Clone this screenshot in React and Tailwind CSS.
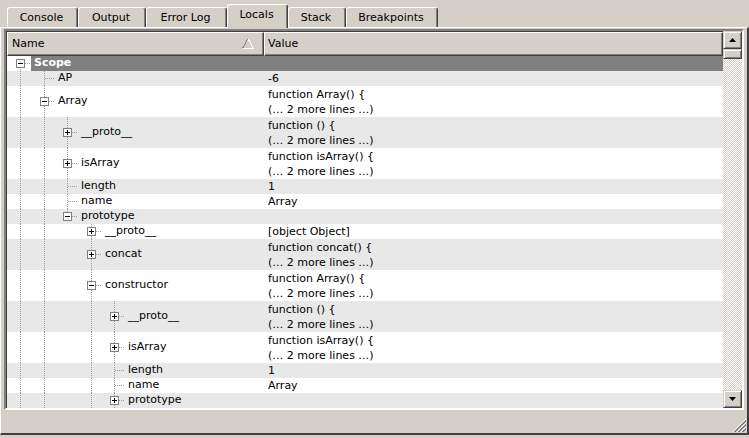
import React from 'react';

const MORE = '(… 2 more lines …)';

const tabs = [
  { label: 'Console', w: 'w-[71px]' },
  { label: 'Output', w: 'w-[68px]' },
  { label: 'Error Log', w: 'w-[81px]' },
  { label: 'Locals', w: 'w-[61px]', active: true },
  { label: 'Stack', w: 'w-[58px]' },
  { label: 'Breakpoints', w: 'w-[92px]' },
];

// own: how the item's own level line runs through the row
const rows = [
  { l: 0, name: 'Scope', box: 'minus', guides: [], own: 'start', scope: true },
  { l: 1, name: 'AP', value: ['-6'], guides: [0], own: 'through' },
  { l: 1, name: 'Array', value: ['function Array() {', MORE], box: 'minus', guides: [0], own: 'through' },
  { l: 2, name: '__proto__', value: ['function () {', MORE], box: 'plus', guides: [0, 1], own: 'through' },
  { l: 2, name: 'isArray', value: ['function isArray() {', MORE], box: 'plus', guides: [0, 1], own: 'through' },
  { l: 2, name: 'length', value: ['1'], guides: [0, 1], own: 'through' },
  { l: 2, name: 'name', value: ['Array'], guides: [0, 1], own: 'through' },
  { l: 2, name: 'prototype', value: [''], box: 'minus', guides: [0, 1], own: 'end' },
  { l: 3, name: '__proto__', value: ['[object Object]'], box: 'plus', guides: [0, 1], own: 'through' },
  { l: 3, name: 'concat', value: ['function concat() {', MORE], box: 'plus', guides: [0, 1], own: 'through' },
  { l: 3, name: 'constructor', value: ['function Array() {', MORE], box: 'minus', guides: [0, 1], own: 'through' },
  { l: 4, name: '__proto__', value: ['function () {', MORE], box: 'plus', guides: [0, 1, 3], own: 'through' },
  { l: 4, name: 'isArray', value: ['function isArray() {', MORE], box: 'plus', guides: [0, 1, 3], own: 'through' },
  { l: 4, name: 'length', value: ['1'], guides: [0, 1, 3], own: 'through' },
  { l: 4, name: 'name', value: ['Array'], guides: [0, 1, 3], own: 'through' },
  { l: 4, name: 'prototype', value: [''], box: 'plus', guides: [0, 1, 3], own: 'through' },
];

const indent = { 0: 'pl-[27px]', 1: 'pl-[51px]', 2: 'pl-[74px]', 3: 'pl-[98px]', 4: 'pl-[121px]' };

const LX = (l) => 13 + Math.round(23.5 * l);

function TreeLines({ row, h }) {
  const mid = Math.floor(h / 2);
  const x = LX(row.l);
  const y1 = row.own === 'start' ? mid : 0;
  const y2 = row.own === 'end' ? mid : h;
  const hEnd = row.scope ? 24 : x + 11;

  return (
    <svg className="absolute left-0 top-0" width={258} height={h}>
      <g stroke="#9c9c9c" strokeDasharray="1 1" shapeRendering="crispEdges">
        {row.guides.map((g) => (
          <line key={g} x1={LX(g) + 0.5} y1={0} x2={LX(g) + 0.5} y2={h} />
        ))}
        <line x1={x + 0.5} y1={y1} x2={x + 0.5} y2={y2} />
        <line x1={x + 1} y1={mid + 0.5} x2={hEnd} y2={mid + 0.5} />
      </g>
      {row.box && (
        <g shapeRendering="crispEdges">
          <rect x={x - 4 + 0.5} y={mid - 4 + 0.5} width={8} height={8} fill="#fff" stroke="#808080" />
          <line x1={x - 2} y1={mid + 0.5} x2={x + 3} y2={mid + 0.5} stroke="#000" />
          {row.box === 'plus' && <line x1={x + 0.5} y1={mid - 2} x2={x + 0.5} y2={mid + 3} stroke="#000" />}
        </g>
      )}
    </svg>
  );
}

function Row({ row, index }) {
  const double = row.value && row.value.length > 1;
  const h = double ? 31 : 15;
  const stripe = index % 2 === 1 ? 'bg-[#e8e8e8]' : 'bg-white';

  if (row.scope) {
    return (
      <div className="flex h-[15px] bg-white">
        <div className="relative w-[258px] shrink-0 h-full">
          <TreeLines row={row} h={h} />
          <div className="ml-[24px] h-full bg-[#808080] text-white font-bold pl-[3px] flex items-center">
            {row.name}
          </div>
        </div>
        <div className="flex-1 bg-[#808080]" />
      </div>
    );
  }

  return (
    <div className={`flex ${double ? 'h-[31px]' : 'h-[15px]'} ${stripe}`}>
      <div className={`relative w-[258px] shrink-0 h-full flex items-center ${indent[row.l]}`}>
        <TreeLines row={row} h={h} />
        <span className="relative">{row.name}</span>
      </div>
      <div className="flex-1 pl-[3px] flex flex-col justify-center leading-[15px]">
        {row.value.map((v, i) => (
          <div key={i} className="whitespace-nowrap">{v || '\u00a0'}</div>
        ))}
      </div>
    </div>
  );
}

function ScrollButton({ down }) {
  return (
    <div className="h-[18px] flex items-center justify-center bg-[#d4d0c8] border border-t-[#d4d0c8] border-l-[#d4d0c8] border-r-[#404040] border-b-[#404040] shadow-[inset_1px_1px_#ffffff,inset_-1px_-1px_#808080]">
      <svg width="7" height="4" viewBox="0 0 7 4">
        {down ? <polygon points="0,0 7,0 3.5,4" fill="#000" /> : <polygon points="3.5,0 7,4 0,4" fill="#000" />}
      </svg>
    </div>
  );
}

export default function App() {
  return (
    <div className="w-[749px] h-[438px] bg-[#d4d0c8] overflow-hidden text-[11px] text-black font-['DejaVu_Sans',Tahoma,sans-serif]">
      {/* tab strip */}
      <div className="flex items-end h-[27px] pl-[7px]">
        {tabs.map((t) =>
          t.active ? (
            <div
              key={t.label}
              className={`${t.w} h-[24px] -mb-px relative z-10 flex items-center justify-center pb-[2px] pr-[2px] bg-[#d4d0c8] border-t border-l border-white border-r border-r-[#404040] shadow-[inset_-1px_0_#808080] rounded-t-[3px]`}
            >
              {t.label}
            </div>
          ) : (
            <div
              key={t.label}
              className={`${t.w} h-[20px] flex items-center justify-center pt-[1px] pr-[2px] bg-[#d4d0c8] border-t border-l border-white border-r border-r-[#404040] shadow-[inset_-1px_0_#808080] rounded-t-[3px]`}
            >
              {t.label}
            </div>
          )
        )}
      </div>

      {/* tab page */}
      <div className="w-[749px] h-[408px] flex flex-col border-t border-l border-white border-r-2 border-r-[#404040] border-b-2 border-b-[#404040]">
        <div className="ml-[3px] mt-[1px] w-[740px] h-[381px] flex border-2 border-t-[#808080] border-l-[#808080] border-r-white border-b-white shadow-[inset_1px_1px_#404040]">
          {/* list */}
          <div className="flex-1 flex flex-col bg-white mt-[1px] ml-[1px]">
            <div className="flex h-[24px] shrink-0">
              <div className="w-[257px] shrink-0 flex items-center justify-between pl-[4px] pr-[9px] bg-[#d4d0c8] border-t border-l border-white border-r border-b border-r-[#404040] border-b-[#404040] shadow-[inset_-1px_-1px_#808080]">
                <span>Name</span>
                <svg width="12" height="10" viewBox="0 0 12 10" shapeRendering="crispEdges">
                  <line x1="5.5" y1="0.5" x2="0.5" y2="9.5" stroke="#808080" />
                  <line x1="6.5" y1="0.5" x2="11.5" y2="9.5" stroke="#ffffff" />
                  <line x1="0.5" y1="9.5" x2="11.5" y2="9.5" stroke="#ffffff" />
                </svg>
              </div>
              <div className="flex-1 flex items-center pl-[3px] bg-[#d4d0c8] border-t border-l border-white border-r border-b border-r-[#404040] border-b-[#404040] shadow-[inset_-1px_-1px_#808080]">
                Value
              </div>
            </div>
            <div className="flex-1 overflow-hidden bg-white">
              {rows.map((r, i) => (
                <Row key={i} row={r} index={i} />
              ))}
            </div>
          </div>

          {/* scrollbar */}
          <div className="w-[19px] shrink-0 flex flex-col">
            <ScrollButton />
            <div className="h-[10px] bg-[#d4d0c8] border border-t-[#d4d0c8] border-l-[#d4d0c8] border-r-[#404040] border-b-[#404040] shadow-[inset_1px_1px_#ffffff,inset_-1px_-1px_#808080]" />
            <div className="flex-1 bg-[image:repeating-conic-gradient(#d4d0c8_0%_25%,#ffffff_0%_50%)] bg-[length:2px_2px]" />
            <ScrollButton down />
          </div>
        </div>

        {/* size grip */}
        <div className="flex-1 flex items-end justify-end pr-[1px] pb-[1px]">
          <svg width="15" height="15" viewBox="0 0 15 15" shapeRendering="crispEdges">
            {[2, 6, 10].map((k) => (
              <g key={k}>
                <line x1={k} y1={15} x2={15} y2={k} stroke="#ffffff" />
                <line x1={k + 1} y1={15} x2={15} y2={k + 1} stroke="#808080" />
                <line x1={k + 2} y1={15} x2={15} y2={k + 2} stroke="#808080" />
              </g>
            ))}
          </svg>
        </div>
      </div>
    </div>
  );
}
